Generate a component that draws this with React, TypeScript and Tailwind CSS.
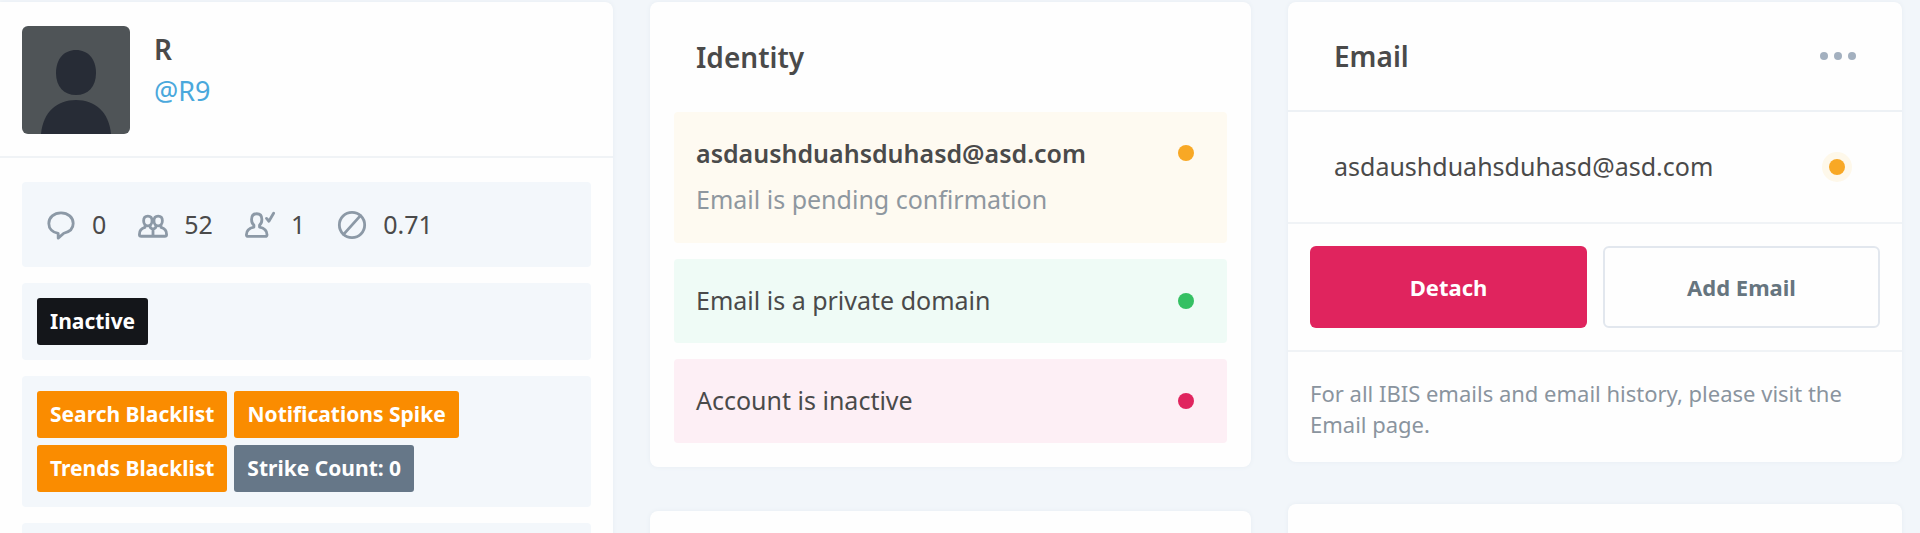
import type { ReactNode } from 'react';

const flags = [
  { id: 1, label: 'Search Blacklist', tone: 'bg-[#fa8c00]' },
  { id: 2, label: 'Notifications Spike', tone: 'bg-[#fa8c00]' },
  { id: 3, label: 'Trends Blacklist', tone: 'bg-[#fa8c00]' },
  { id: 4, label: 'Strike Count: 0', tone: 'bg-[#667788]' },
];

const Card = ({ children, className = '' }: { children?: ReactNode; className?: string }) => (
  <section className={`bg-[#fefefe] rounded-lg shadow-[0_0_4px_#e6ecf2] ${className}`}>{children}</section>
);

const Badge = ({ label, tone }: { label: string; tone: string }) => (
  <span className={`h-[47px] px-[13px] flex items-center rounded-[3px] text-[21px] font-bold text-white ${tone}`}>
    {label}
  </span>
);

const Dot = ({ tone }: { tone: string }) => <span className={`w-4 h-4 shrink-0 rounded-full ${tone}`} />;

const Icon = ({ children }: { children: ReactNode }) => (
  <svg
    viewBox="0 0 32 32"
    className="w-[30px] h-[30px] text-[#8c99a6]"
    fill="none"
    stroke="currentColor"
    strokeWidth="3"
    strokeLinejoin="round"
    strokeLinecap="round"
    aria-hidden="true"
  >
    {children}
  </svg>
);

const Stat = ({ icon, value }: { icon: ReactNode; value: string }) => (
  <li className="flex items-center gap-4">
    <Icon>{icon}</Icon>
    <span>{value}</span>
  </li>
);

const ProfileCard = () => (
  <Card className="rounded-l-none pb-6">
    <header className="flex gap-6 px-[22px] pt-6 pb-[22px] border-b-2 border-[#f0f3f6]">
      <svg viewBox="0 0 108 108" className="w-[108px] h-[108px] rounded-md bg-[#4f5457]" role="img" aria-label="R">
        <path d="M54 24c12 0 20 9 20 23 0 14-8 22-20 22s-20-8-20-22c0-14 8-23 20-23z" fill="#272c36" />
        <path d="M19 108c2-22 16-34 35-34s33 12 35 34z" fill="#272c36" />
      </svg>
      <div className="pt-1">
        <h1 className="text-[28px] leading-[38px] font-semibold">R</h1>
        <a href="#profile" className="block text-[27px] leading-[46px] text-[#4aa8dc]">@R9</a>
      </div>
    </header>

    <div className="px-[22px] pt-6 flex flex-col gap-4">
      <ul className="h-[85px] px-6 flex items-center gap-8 bg-[#f3f7fb] rounded text-[25px]">
        <Stat
          value="0"
          icon={<path d="M16 3C8.500 3 3 7.800 3 14.500c0 5.500 4 9.500 10 10.500v5l6-5.200c6-1.300 10-5 10-10.300C29 7.800 23.500 3 16 3z" />}
        />
        <Stat
          value="52"
          icon={
            <>
              <path d="M10.500 6.500c2.800 0 4.500 2 4.500 5s-1.700 5.500-4.500 5.500S6 14.500 6 11.500s1.700-5 4.500-5z" />
              <path d="M21.500 6.500c2.800 0 4.500 2 4.500 5s-1.700 5.500-4.500 5.500-4.500-2.500-4.500-5.500 1.700-5 4.500-5z" />
              <path d="M7.500 17v1.500c-4 1-6 3.500-6 7.500 0 1.500.5 2 2 2h25c1.500 0 2-.5 2-2 0-4-2-6.500-6-7.500V17M13 17v1.500l3 2.500 3-2.500V17M16 21v7" />
            </>
          }
        />
        <Stat
          value="1"
          icon={
            <>
              <path d="M12.500 4c3.500 0 5.500 2.500 5.500 6.200 0 2.800-1 4.800-2.500 6v2c5 1 8 3.800 8 8.200 0 1.300-.5 1.800-1.800 1.800H3.300c-1.300 0-1.800-.5-1.800-1.800 0-4.400 3-7.200 8-8.200v-2C8 15 7 13 7 10.200 7 6.500 9 4 12.500 4z" />
              <path d="M23 9l2.500 3L30.500 3.500" />
            </>
          }
        />
        <Stat
          value="0.71"
          icon={
            <>
              <circle cx="16" cy="16" r="13.500" />
              <path d="M7 26L25 6" />
            </>
          }
        />
      </ul>
      <div className="p-[15px] flex bg-[#f3f7fb] rounded">
        <Badge label="Inactive" tone="bg-[#14161a]" />
      </div>
      <div className="p-[15px] pr-24 flex flex-wrap gap-[7px] bg-[#f3f7fb] rounded">
        {flags.map((flag) => (
          <Badge key={flag.id} label={flag.label} tone={flag.tone} />
        ))}
      </div>
      <div className="h-20 bg-[#f3f7fb] rounded" />
    </div>
  </Card>
);

const IdentityCard = () => (
  <Card className="px-6 pb-6">
    <h2 className="h-[110px] px-[22px] flex items-center text-[28px] font-semibold">Identity</h2>
    <ul className="flex flex-col gap-4 text-[25px]">
      <li className="h-[131px] pl-[22px] pr-[33px] pt-[18px] bg-[#fefaf1] rounded">
        <div className="flex items-center justify-between leading-[46px]">
          <strong className="font-semibold">asdaushduahsduhasd@asd.com</strong>
          <Dot tone="bg-[#f8a825]" />
        </div>
        <p className="leading-[46px] text-[#8e979f]">Email is pending confirmation</p>
      </li>
      <li className="h-[84px] pl-[22px] pr-[33px] flex items-center justify-between bg-[#effbf6] rounded">
        Email is a private domain
        <Dot tone="bg-[#35c063]" />
      </li>
      <li className="h-[84px] pl-[22px] pr-[33px] flex items-center justify-between bg-[#fdeff5] rounded">
        Account is inactive
        <Dot tone="bg-[#e0245e]" />
      </li>
    </ul>
  </Card>
);

const EmailCard = () => (
  <Card>
    <header className="h-[110px] px-[46px] flex items-center justify-between border-b-2 border-[#edf1f5]">
      <h2 className="text-[28px] font-semibold">Email</h2>
      <button type="button" aria-label="More" className="flex gap-[6px]">
        <span className="w-2 h-2 rounded-full bg-[#a3b0bf]" />
        <span className="w-2 h-2 rounded-full bg-[#a3b0bf]" />
        <span className="w-2 h-2 rounded-full bg-[#a3b0bf]" />
      </button>
    </header>
    <div className="h-[112px] pl-[46px] pr-[57px] flex items-center justify-between border-b-2 border-[#f0f3f6] text-[25px]">
      asdaushduahsduhasd@asd.com
      <span className="rounded-full shadow-[0_0_0_7px_#fef8ea] flex">
        <Dot tone="bg-[#f8a825]" />
      </span>
    </div>
    <div className="px-[22px] py-[22px] grid grid-cols-2 gap-4 border-b-2 border-[#f0f3f6] text-[22px] font-bold">
      <button type="button" className="h-[82px] rounded-md bg-[#e0245e] text-white">Detach</button>
      <button type="button" className="h-[82px] rounded-md border-2 border-[#e2e7ee] text-[#66757f]">Add Email</button>
    </div>
    <p className="px-[22px] pt-[26px] pb-[22px] text-[22px] leading-[31px] text-[#8a949e]">
      For all IBIS emails and email history, please visit the Email page.
    </p>
  </Card>
);

const App = () => (
  <main className="h-screen overflow-hidden pt-[2px] pr-[18px] bg-[#f2f6fa] text-[#4a4a4a] font-['Noto_Sans','Open_Sans',sans-serif]">
    <div className="grid grid-cols-[613fr_601fr_614fr] gap-[37px]">
      <ProfileCard />
      <div className="flex flex-col gap-[44px]">
        <IdentityCard />
        <Card className="h-40" />
      </div>
      <div className="flex flex-col gap-[42px]">
        <EmailCard />
        <Card className="h-40" />
      </div>
    </div>
  </main>
);

export default App;
